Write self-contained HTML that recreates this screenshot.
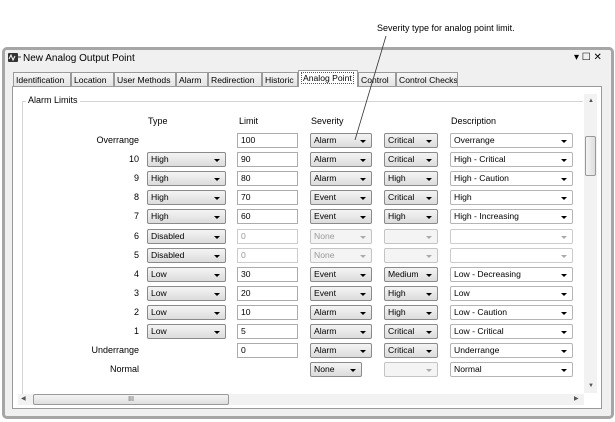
<!DOCTYPE html>
<html><head><meta charset="utf-8"><style>
*{box-sizing:border-box;margin:0;padding:0}
body{width:615px;height:422px;background:#fff;position:relative;overflow:hidden;font-family:"Liberation Sans",sans-serif;font-size:9px;color:#000}
.a{position:absolute}
.win{left:2px;top:47px;width:612px;height:372px;border:3px solid #a6a6a6;border-radius:5px;background:#f0f0f0}
.tab{position:absolute;top:72px;height:15px;border:1px solid #9a9a9a;border-bottom:none;background:linear-gradient(#f6f6f6,#e2e2e2);padding:2px 2px 0;font-size:8.6px;white-space:nowrap;overflow:hidden}
.panel{left:12px;top:86px;width:590px;height:323px;border:1px solid #9a9a9a;background:#fff}
.lbl{position:absolute;width:60px;text-align:right;left:79px}
.cb{position:absolute;height:15px;border:1px solid #8a8a8a;border-radius:2px;background:linear-gradient(#f4f4f4,#dcdcdc);padding:1px 0 0 3px;font-size:8.6px}
.cb:after{content:"";position:absolute;right:5px;top:6px;border-left:3px solid transparent;border-right:3px solid transparent;border-top:3px solid #000}
.cb.d{border-color:#c4c4c4;background:#f4f4f4;color:#999}
.cb.d:after{border-top-color:#aaa}
.cb.w{background:#fff;border-color:#b5b5b5}
.cb.wd{background:#fff;border-color:#ccc}
.cb.wd:after{border-top-color:#aaa}
.tx{position:absolute;height:15px;border:1px solid #acacac;background:#fff;padding:1px 0 0 3px;left:237px;width:61px;font-size:8.6px}
.tx.d{color:#999;border-color:#ccc}
.t{left:147px;width:79px}.s{left:310px;width:62px}.c{left:384px;width:54px}.e{left:450px;width:123px}
</style></head><body>
<div class="a" style="left:377px;top:23px;font-size:9px">Severity type for analog point limit.</div>
<div class="a win"></div>
<div class="a" style="left:8px;top:53px;width:10px;height:9px;background:#333;border-radius:1px"></div>
<svg class="a" style="left:8px;top:53px" width="14" height="9"><path d="M1 6 L3 2 L5 7 L7 3" stroke="#fff" fill="none" stroke-width="1"/><path d="M10 4 L13 4" stroke="#333"/></svg>
<div class="a" style="left:23px;top:53px;font-size:10px">New Analog Output Point</div>
<div class="a" style="left:574px;top:52px;font-size:10px">▾ ☐ ✕</div>
<div class="tab" style="left:13px;width:58px">Identification</div>
<div class="tab" style="left:71px;width:43px">Location</div>
<div class="tab" style="left:114px;width:62px">User Methods</div>
<div class="tab" style="left:176px;width:32px">Alarm</div>
<div class="tab" style="left:208px;width:54px">Redirection</div>
<div class="tab" style="left:262px;width:36px">Historic</div>
<div class="tab" style="left:298px;top:70px;height:17px;width:60px;background:#fff;z-index:2"><span style="border:1px dotted #555;padding:0 1px">Analog Point</span></div>
<div class="tab" style="left:358px;width:38px">Control</div>
<div class="tab" style="left:396px;width:62px">Control Checks</div>
<div class="a panel"></div>
<div class="a" style="left:22px;top:101px;width:561px;height:300px;border-top:1px solid #d5d5d5;border-left:1px solid #d5d5d5"></div>
<div class="a" style="left:26px;top:95px;background:#fff;padding:0 2px">Alarm Limits</div>
<div class="a" style="left:148px;top:116px">Type</div>
<div class="a" style="left:239px;top:116px">Limit</div>
<div class="a" style="left:311px;top:116px">Severity</div>
<div class="a" style="left:451px;top:116px">Description</div>

<div class="a" style="left:0;top:133px;width:600px">
<div class="lbl" style="top:2px">Overrange</div><div class="tx">100</div><div class="cb s">Alarm</div><div class="cb c">Critical</div><div class="cb w e">Overrange</div></div>
<div class="a" style="left:0;top:152px;width:600px">
<div class="lbl" style="top:2px">10</div><div class="cb t">High</div><div class="tx">90</div><div class="cb s">Alarm</div><div class="cb c">Critical</div><div class="cb w e">High - Critical</div></div>
<div class="a" style="left:0;top:171px;width:600px">
<div class="lbl" style="top:2px">9</div><div class="cb t">High</div><div class="tx">80</div><div class="cb s">Alarm</div><div class="cb c">High</div><div class="cb w e">High - Caution</div></div>
<div class="a" style="left:0;top:190px;width:600px">
<div class="lbl" style="top:2px">8</div><div class="cb t">High</div><div class="tx">70</div><div class="cb s">Event</div><div class="cb c">Critical</div><div class="cb w e">High</div></div>
<div class="a" style="left:0;top:209px;width:600px">
<div class="lbl" style="top:2px">7</div><div class="cb t">High</div><div class="tx">60</div><div class="cb s">Event</div><div class="cb c">High</div><div class="cb w e">High - Increasing</div></div>
<div class="a" style="left:0;top:229px;width:600px">
<div class="lbl" style="top:2px">6</div><div class="cb t">Disabled</div><div class="tx d">0</div><div class="cb d s">None</div><div class="cb d c"></div><div class="cb wd e"></div></div>
<div class="a" style="left:0;top:248px;width:600px">
<div class="lbl" style="top:2px">5</div><div class="cb t">Disabled</div><div class="tx d">0</div><div class="cb d s">None</div><div class="cb d c"></div><div class="cb wd e"></div></div>
<div class="a" style="left:0;top:267px;width:600px">
<div class="lbl" style="top:2px">4</div><div class="cb t">Low</div><div class="tx">30</div><div class="cb s">Event</div><div class="cb c">Medium</div><div class="cb w e">Low - Decreasing</div></div>
<div class="a" style="left:0;top:286px;width:600px">
<div class="lbl" style="top:2px">3</div><div class="cb t">Low</div><div class="tx">20</div><div class="cb s">Event</div><div class="cb c">High</div><div class="cb w e">Low</div></div>
<div class="a" style="left:0;top:305px;width:600px">
<div class="lbl" style="top:2px">2</div><div class="cb t">Low</div><div class="tx">10</div><div class="cb s">Alarm</div><div class="cb c">High</div><div class="cb w e">Low - Caution</div></div>
<div class="a" style="left:0;top:324px;width:600px">
<div class="lbl" style="top:2px">1</div><div class="cb t">Low</div><div class="tx">5</div><div class="cb s">Alarm</div><div class="cb c">Critical</div><div class="cb w e">Low - Critical</div></div>
<div class="a" style="left:0;top:343px;width:600px">
<div class="lbl" style="top:2px">Underrange</div><div class="tx">0</div><div class="cb s">Alarm</div><div class="cb c">Critical</div><div class="cb w e">Underrange</div></div>
<div class="a" style="left:0;top:362px;width:600px">
<div class="lbl" style="top:2px">Normal</div><div class="cb s" style="width:52px">None</div><div class="cb d c"></div><div class="cb w e">Normal</div></div>

<div class="a" style="left:584px;top:94px;width:13px;height:299px;background:#f2f2f2"></div>
<div class="a" style="left:588px;top:98px;font-size:6px;color:#555">▲</div>
<div class="a" style="left:588px;top:383px;font-size:6px;color:#555">▼</div>
<div class="a" style="left:585px;top:136px;width:11px;height:40px;border:1px solid #999;border-radius:2px;background:linear-gradient(90deg,#f4f4f4,#dedede)"></div>
<div class="a" style="left:18px;top:394px;width:566px;height:11px;background:#f2f2f2"></div>
<div class="a" style="left:21px;top:395px;font-size:6px;color:#555">◀</div>
<div class="a" style="left:574px;top:395px;font-size:6px;color:#555">▶</div>
<div class="a" style="left:33px;top:394px;width:196px;height:11px;border:1px solid #999;border-radius:2px;background:linear-gradient(#f4f4f4,#dedede);text-align:center;font-size:7px;line-height:9px;color:#555">III</div>
<svg class="a" style="left:0;top:0;z-index:10" width="615" height="422"><line x1="386" y1="36" x2="355" y2="140" stroke="#333" stroke-width="0.8"/></svg>
</body></html>
